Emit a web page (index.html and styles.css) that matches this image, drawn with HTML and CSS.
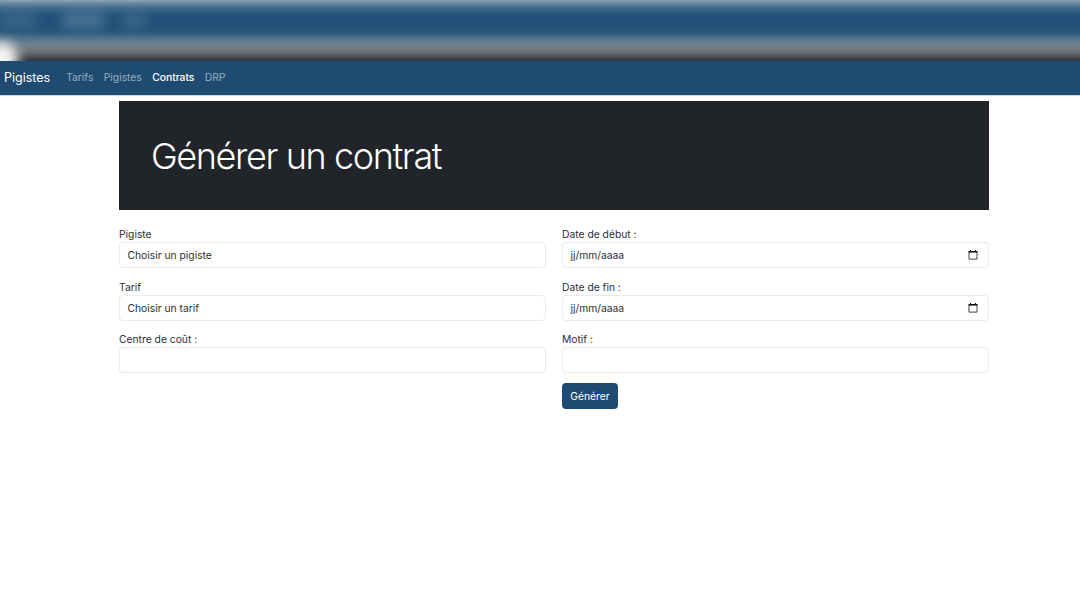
FILE: index.html
```html
<!DOCTYPE html>
<html lang="fr">
<head>
<meta charset="utf-8">
<title>Générer un contrat</title>
<link rel="stylesheet" href="styles.css">
</head>
<body>
<div class="chrome" aria-hidden="true">
  <span class="blob blob-a"></span>
  <span class="blob blob-b"></span>
  <span class="blob blob-c"></span>
  <span class="glare"></span>
</div>
<nav class="navbar">
  <a class="brand" href="#">Pigistes</a>
  <a class="nav-link" href="#">Tarifs</a>
  <a class="nav-link" href="#">Pigistes</a>
  <a class="nav-link active" href="#">Contrats</a>
  <a class="nav-link" href="#">DRP</a>
</nav>
<main class="container">
  <header class="hero"><h1>Générer un contrat</h1></header>
  <form class="form-grid">
    <div class="group">
      <label>Pigiste</label>
      <div class="control">Choisir un pigiste</div>
    </div>
    <div class="group">
      <label>Date de début :</label>
      <div class="control">jj/mm/aaaa
        <svg class="cal" viewBox="0 0 10 10" width="10" height="10"><path d="M1 1.5h8v7.6H1z" fill="none" stroke="#444" stroke-width="1"/><path d="M.6 1h8.800v1.600H.6z" fill="#111"/><path d="M2.500 0v1M7.500 0v1" stroke="#111"/></svg>
      </div>
    </div>
    <div class="group">
      <label>Tarif</label>
      <div class="control">Choisir un tarif</div>
    </div>
    <div class="group">
      <label>Date de fin :</label>
      <div class="control">jj/mm/aaaa
        <svg class="cal" viewBox="0 0 10 10" width="10" height="10"><path d="M1 1.500h8v7.600H1z" fill="none" stroke="#444" stroke-width="1"/><path d="M.6 1h8.800v1.600H.6z" fill="#111"/><path d="M2.500 0v1M7.500 0v1" stroke="#111"/></svg>
      </div>
    </div>
    <div class="group">
      <label>Centre de coût :</label>
      <div class="control"></div>
    </div>
    <div class="group">
      <label>Motif :</label>
      <div class="control"></div>
      <button class="btn" type="button">Générer</button>
    </div>
  </form>
</main>
</body>
</html>
```
FILE: styles.css
```css
* { box-sizing: border-box; }
html, body { margin: 0; padding: 0; }
body {
  background: #fff;
  color: #2b2f33;
  font-family: Inter, "Liberation Sans", Arial, sans-serif;
  font-size: 10.300px;
  overflow: hidden;
  height: 607px;
}
.chrome {
  position: relative;
  height: 61px;
  overflow: hidden;
  background: linear-gradient(to bottom,
    #8fa3b6 0, #6f8aa3 3px, #3f6a8e 8px, #24527a 15px, #205078 24px,
    #275679 32px, #476d88 37px, #6a7f90 43px, #737c84 48px, #6b6f74 52px,
    #4c4e54 57px, #38393f 60px, #38393f 61px);
}
.blob { position: absolute; filter: blur(6px); background: rgba(130, 165, 190, .25); }
.blob-a { left: 0; top: 13px; width: 36px; height: 15px; }
.blob-b { left: 62px; top: 12px; width: 42px; height: 16px; background: rgba(130, 165, 190, .4); }
.blob-c { left: 122px; top: 13px; width: 24px; height: 15px; }
.glare {
  position: absolute; left: -16px; top: 42px; width: 34px; height: 34px;
  border-radius: 50%; background: #f5f5f2; filter: blur(6px);
}
.navbar {
  display: flex;
  align-items: center;
  height: 34px;
  padding: 0 0 2px 4px;
  background: #1f4b72;
  box-shadow: 0 1px 0 #c9d8e4;
}
.navbar a { text-decoration: none; }
.brand { color: #fff; font-size: 12.500px; margin-right: 16px; }
.nav-link { color: rgba(255, 255, 255, .55); font-size: 10.300px; margin-right: 10.400px; }
.nav-link.active { color: #fff; font-weight: 500; }
.container { width: 870px; margin: 6px 0 0 119px; }
.hero {
  height: 109px;
  background: #212529;
  color: #fff;
  display: flex;
  align-items: center;
  padding-left: 32px;
}
.hero h1 { margin: 0; font-size: 36px; font-weight: 300; letter-spacing: -1.400px; }
.form-grid {
  display: grid;
  grid-template-columns: 427px 427px;
  column-gap: 16px;
  row-gap: 11.500px;
  margin-top: 17px;
}
.group { display: flex; flex-direction: column; }
.group label { line-height: 14px; height: 15px; }
.control {
  height: 26px;
  border: 1px solid #e9ebed;
  border-radius: 4px;
  padding: 0 8px 0 7.500px;
  display: flex;
  align-items: center;
  justify-content: space-between;
  background: #fff;
}
.cal { margin-right: 2px; }
.btn {
  align-self: flex-start;
  margin-top: 10px;
  height: 26px;
  width: 56px;
  padding: 0;
  border: 0;
  border-radius: 4px;
  background: #1f4b72;
  color: #fff;
  font: inherit;
}
```
